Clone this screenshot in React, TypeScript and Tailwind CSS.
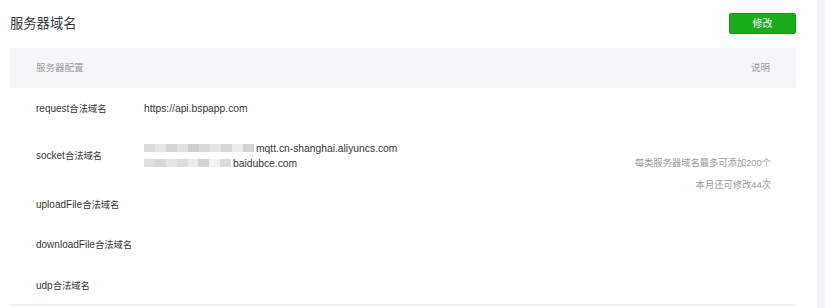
import React from 'react';

const rows = [
    { name: 'request', values: ['https://api.bspapp.com'] },
    { name: 'socket', values: ['mqtt.cn-shanghai.aliyuncs.com', 'baidubce.com'], masked: true },
    { name: 'uploadFile', values: [] },
    { name: 'downloadFile', values: [] },
    { name: 'udp', values: [] },
];

// pixelated blur in front of the masked socket hosts
const maskA = ['#dcdcdc', '#e6e6e6', '#d6d6d6', '#e2e2e2', '#cfcfcf', '#dadada', '#e4e4e4', '#d8d8d8', '#ececec', '#d2d2d2'];
const maskB = ['#e0e0e0', '#d8d8d8', '#e6e6e6', '#dddddd', '#eaeaea', '#d4d4d4', '#f0f0f0', '#dcdcdc'];

const Mask = ({ colors, width }: { colors: string[]; width: number }) => (
    <span className="inline-flex h-[8px] align-middle mr-[2px] -mt-[2px] blur-[0.6px]" style={{ width }}>
        {colors.map((c, i) => <span key={i} className="flex-1 h-full" style={{ background: c }} />)}
    </span>
);

export default function App() {
    return (
        <div className="flex w-[825px] h-[308px] bg-white overflow-hidden" style={{ fontFamily: '"Liberation Sans", "Noto Sans CJK SC", sans-serif' }}>
            <div className="w-[817px] pl-[10px] pr-[21px] pt-[13px]">
                <div className="flex justify-between items-start">
                    <h2 className="text-[13.3px] leading-[20px] text-[#353535] font-normal mt-[1px]">服务器域名</h2>
                    <button className="w-[67px] h-[21px] bg-[#1aad19] border border-[#179b16] rounded-[2px] text-white text-[10px] leading-[19px]">修改</button>
                </div>
                <table className="w-full mt-[14px] border-collapse text-[10px]">
                    <thead>
                        <tr className="bg-[#f6f7f9] h-[40px] text-[#9a9a9a] text-[9.5px]">
                            <th className="font-normal text-left pl-[26px] w-[134px] whitespace-nowrap">服务器配置</th>
                            <th></th>
                            <th className="font-normal text-right pr-[26px] text-[9.5px]">说明</th>
                        </tr>
                    </thead>
                    <tbody className="text-[#353535]">
                        {rows.map((r, i) => (
                            <tr key={r.name} className={i === 4 ? 'border-b-2 border-[#f2f2f2]' : ''}>
                                <td className={`pl-[26px] whitespace-nowrap ${i === 1 ? 'h-[57px] pb-[1px]' : 'h-[40px]'} ${i === 0 ? 'pt-[1px]' : ''} ${i === 4 ? 'pt-[2px]' : ''}`}>
                                    {r.name}<span className="text-[9.3px]">合法域名</span>
                                </td>
                                <td className="text-[#353535] leading-[15px] text-[10.3px] whitespace-nowrap">
                                    {r.values.map((v, j) => (
                                        <div key={v} className={r.masked && j === 0 ? '-mt-[2px]' : ''}>
                                            {r.masked && <Mask colors={j === 0 ? maskA : maskB} width={j === 0 ? 110 : 87} />}
                                            {v}
                                        </div>
                                    ))}
                                </td>
                                {i === 1 && (
                                    <td rowSpan={2} className="text-right pr-[25px] pb-[5px] text-[#9a9a9a] text-[9.3px] leading-[22px] align-middle whitespace-nowrap">
                                        <div>每类服务器域名最多可添加200个</div>
                                        <div>本月还可修改44次</div>
                                    </td>
                                )}
                                {i !== 1 && i !== 2 && <td></td>}
                            </tr>
                        ))}
                    </tbody>
                </table>
            </div>
            <div className="flex-1 bg-[#f4f5f9]" />
        </div>
    );
}
